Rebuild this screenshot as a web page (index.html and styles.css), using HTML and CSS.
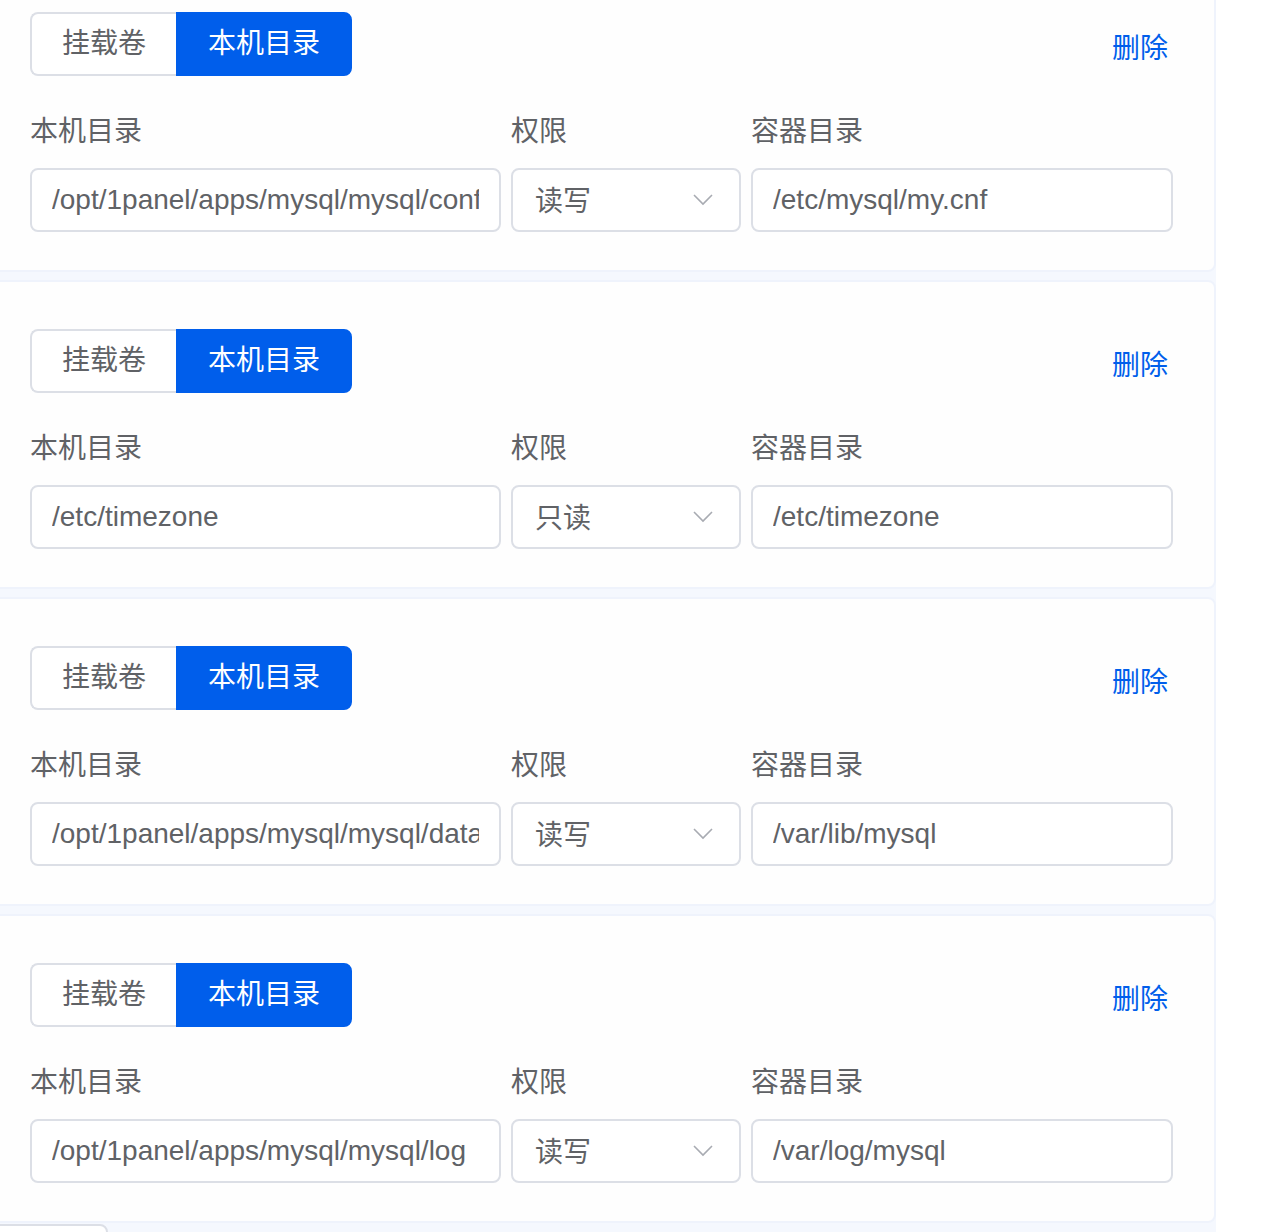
FILE: index.html
```html
<!DOCTYPE html>
<html lang="zh-CN">
  <head>
    <meta charset="UTF-8" />
    <meta name="viewport" content="width=device-width, initial-scale=1.0" />
    <title>挂载目录</title>
    <link rel="stylesheet" href="styles.css">
  </head>
  <body>
    <div class="volume-list">
      <div class="volume-card">
        <div class="card-head">
          <div class="radio-group">
            <span class="radio-btn">挂载卷</span>
            <span class="radio-btn active">本机目录</span>
          </div>
          <a class="link-delete">删除</a>
        </div>
        <div class="form-row">
          <div class="form-item col-source">
            <label>本机目录</label>
            <input class="text-input" type="text" value="/opt/1panel/apps/mysql/mysql/conf/my.cnf" />
          </div>
          <div class="form-item col-mode">
            <label>权限</label>
            <div class="select-box">
              <span>读写</span>
              <svg class="arrow" viewBox="0 0 20 12" width="20" height="12"><polyline points="1,1 10,10 19,1" fill="none" stroke="#a8abb2" stroke-width="1.6" /></svg>
            </div>
          </div>
          <div class="form-item col-target">
            <label>容器目录</label>
            <input class="text-input" type="text" value="/etc/mysql/my.cnf" />
          </div>
        </div>
      </div>

      <div class="volume-card">
        <div class="card-head">
          <div class="radio-group">
            <span class="radio-btn">挂载卷</span>
            <span class="radio-btn active">本机目录</span>
          </div>
          <a class="link-delete">删除</a>
        </div>
        <div class="form-row">
          <div class="form-item col-source">
            <label>本机目录</label>
            <input class="text-input" type="text" value="/etc/timezone" />
          </div>
          <div class="form-item col-mode">
            <label>权限</label>
            <div class="select-box">
              <span>只读</span>
              <svg class="arrow" viewBox="0 0 20 12" width="20" height="12"><polyline points="1,1 10,10 19,1" fill="none" stroke="#a8abb2" stroke-width="1.6" /></svg>
            </div>
          </div>
          <div class="form-item col-target">
            <label>容器目录</label>
            <input class="text-input" type="text" value="/etc/timezone" />
          </div>
        </div>
      </div>

      <div class="volume-card">
        <div class="card-head">
          <div class="radio-group">
            <span class="radio-btn">挂载卷</span>
            <span class="radio-btn active">本机目录</span>
          </div>
          <a class="link-delete">删除</a>
        </div>
        <div class="form-row">
          <div class="form-item col-source">
            <label>本机目录</label>
            <input class="text-input" type="text" value="/opt/1panel/apps/mysql/mysql/data" />
          </div>
          <div class="form-item col-mode">
            <label>权限</label>
            <div class="select-box">
              <span>读写</span>
              <svg class="arrow" viewBox="0 0 20 12" width="20" height="12"><polyline points="1,1 10,10 19,1" fill="none" stroke="#a8abb2" stroke-width="1.6" /></svg>
            </div>
          </div>
          <div class="form-item col-target">
            <label>容器目录</label>
            <input class="text-input" type="text" value="/var/lib/mysql" />
          </div>
        </div>
      </div>

      <div class="volume-card">
        <div class="card-head">
          <div class="radio-group">
            <span class="radio-btn">挂载卷</span>
            <span class="radio-btn active">本机目录</span>
          </div>
          <a class="link-delete">删除</a>
        </div>
        <div class="form-row">
          <div class="form-item col-source">
            <label>本机目录</label>
            <input class="text-input" type="text" value="/opt/1panel/apps/mysql/mysql/log" />
          </div>
          <div class="form-item col-mode">
            <label>权限</label>
            <div class="select-box">
              <span>读写</span>
              <svg class="arrow" viewBox="0 0 20 12" width="20" height="12"><polyline points="1,1 10,10 19,1" fill="none" stroke="#a8abb2" stroke-width="1.6" /></svg>
            </div>
          </div>
          <div class="form-item col-target">
            <label>容器目录</label>
            <input class="text-input" type="text" value="/var/log/mysql" />
          </div>
        </div>
      </div>

      <div class="add-row">
        <button class="btn-add" type="button" aria-label="添加"></button>
      </div>
    </div>
  </body>
</html>
```

FILE: styles.css
```css
body {
  margin: 0;
  padding: 0;
  background: #fff;
  font-family: "Liberation Sans", Arial, "Noto Sans CJK SC", sans-serif;
  color: #606266;
  overflow: hidden;
}
.volume-list {
  width: 1226px;
  margin: -37px 0 0 -10px;
  display: flex;
  flex-direction: column;
  gap: 8px;
  background: #f5f8fe;
}
.volume-card {
  background: #fefefe;
  border: 2px solid #eff3fc;
  border-radius: 8px;
  padding: 47px 38px 38px 38px;
}
.card-head {
  display: flex;
  justify-content: space-between;
  align-items: center;
}
.radio-group {
  display: flex;
}
.radio-btn {
  font-size: 28px;
  line-height: 60px;
  padding: 0 30px;
  border: 2px solid #dcdfe6;
  background: #fff;
  color: #606266;
}
.radio-btn:first-child {
  border-radius: 8px 0 0 8px;
  border-right: none;
}
.radio-btn.active {
  background: #005eeb;
  border-color: #005eeb;
  color: #fff;
  border-radius: 0 8px 8px 0;
}
.link-delete {
  font-size: 28px;
  color: #005eeb;
  margin-right: 8px;
  padding-top: 4px;
  cursor: pointer;
}
.form-row {
  display: flex;
  gap: 10px;
  margin-top: 34px;
}
.form-item {
  display: flex;
  flex-direction: column;
}
.form-item label {
  font-size: 28px;
  line-height: 44px;
  margin-bottom: 14px;
  color: #606266;
}
.col-source {
  width: 471px;
}
.col-mode {
  width: 230px;
}
.col-target {
  width: 422px;
}
.text-input,
.select-box {
  box-sizing: border-box;
  height: 64px;
  border: 2px solid #dcdfe6;
  border-radius: 8px;
  background: #fff;
  font-family: inherit;
  font-size: 28px;
  color: #606266;
  padding: 0 20px;
  outline: none;
}
.text-input {
  width: 100%;
}
.select-box {
  display: flex;
  align-items: center;
  justify-content: space-between;
  padding: 0 26px 0 22px;
}
.select-box span {
  margin-top: -3px;
}
.add-row {
  margin-top: -7px;
  height: 60px;
}
.btn-add {
  display: block;
  margin-left: -10px;
  width: 128px;
  height: 60px;
  background: #fff;
  border: 2px solid #dcdfe6;
  border-radius: 8px;
}
```
